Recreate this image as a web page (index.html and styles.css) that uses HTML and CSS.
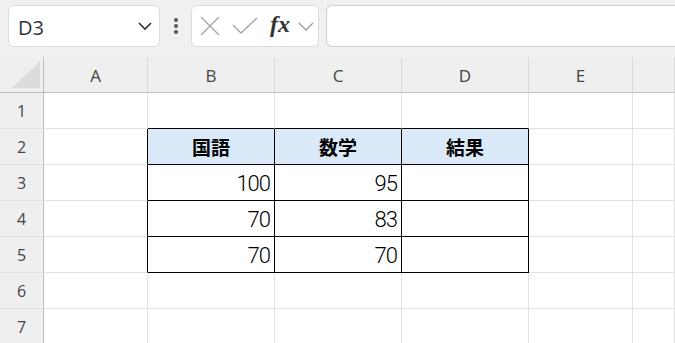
FILE: index.html
```html
<!DOCTYPE html>
<html lang="ja">
<head>
    <meta charset="UTF-8">
    <meta name="viewport" content="width=device-width, initial-scale=1.0">
    <title>Sheet1</title>
    <link rel="stylesheet" href="styles.css">
</head>
<body>

<div class="formula-bar">
    <div class="name-box">
        <span class="name-text">D3</span>
        <svg class="chevron" width="16" height="10" viewBox="0 0 16 10">
            <path d="M2 2 L8 8 L14 2" fill="none" stroke="#333" stroke-width="1.6"/>
        </svg>
    </div>
    <div class="more">
        <span class="dot"></span>
        <span class="dot"></span>
        <span class="dot"></span>
    </div>
    <div class="fx-box">
        <svg width="20" height="20" viewBox="0 0 20 20">
            <path d="M1 1 L19 19 M19 1 L1 19" fill="none" stroke="#a6a6a6" stroke-width="1.4"/>
        </svg>
        <svg width="26" height="18" viewBox="0 0 26 18">
            <path d="M1 8 L9 16 L25 1" fill="none" stroke="#a6a6a6" stroke-width="1.4"/>
        </svg>
        <span class="fx">fx</span>
        <svg width="16" height="10" viewBox="0 0 16 10">
            <path d="M1 2 L8 9 L15 2" fill="none" stroke="#9a9a9a" stroke-width="1.3"/>
        </svg>
    </div>
    <div class="formula-input"></div>
</div>

<table class="sheet">
    <colgroup>
        <col class="col-head">
        <col class="col-a">
        <col class="col-b">
        <col class="col-b">
        <col class="col-b">
        <col class="col-a">
        <col class="col-f">
    </colgroup>
    <tr class="col-labels">
        <th class="corner"><span class="triangle"></span></th>
        <th>A</th><th>B</th><th>C</th><th>D</th><th>E</th><th></th>
    </tr>
    <tr>
        <th class="row-label">1</th>
        <td></td><td class="top-edge"></td><td class="top-edge"></td><td class="top-edge"></td><td></td><td></td>
    </tr>
    <tr>
        <th class="row-label">2</th>
        <td class="left-edge"></td>
        <td class="box title">国語</td>
        <td class="box title">数学</td>
        <td class="box title">結果</td>
        <td></td><td></td>
    </tr>
    <tr>
        <th class="row-label">3</th>
        <td class="left-edge"></td>
        <td class="box num">100</td>
        <td class="box num">95</td>
        <td class="box"></td>
        <td></td><td></td>
    </tr>
    <tr>
        <th class="row-label">4</th>
        <td class="left-edge"></td>
        <td class="box num">70</td>
        <td class="box num">83</td>
        <td class="box"></td>
        <td></td><td></td>
    </tr>
    <tr>
        <th class="row-label">5</th>
        <td class="left-edge"></td>
        <td class="box num">70</td>
        <td class="box num">70</td>
        <td class="box"></td>
        <td></td><td></td>
    </tr>
    <tr>
        <th class="row-label">6</th>
        <td></td><td></td><td></td><td></td><td></td><td></td>
    </tr>
    <tr>
        <th class="row-label">7</th>
        <td></td><td></td><td></td><td></td><td></td><td></td>
    </tr>
</table>

</body>
</html>
```

FILE: styles.css
```css
body {
    margin: 0;
    font-family: "Open Sans", "Noto Sans", sans-serif;
    background-color: #fff;
    overflow: hidden;
}
.formula-bar {
    display: flex;
    align-items: stretch;
    height: 57px;
    box-sizing: border-box;
    padding: 5px 0 10px 8px;
    background-color: #eff1f1;
}
.name-box {
    display: flex;
    align-items: center;
    justify-content: space-between;
    width: 152px;
    box-sizing: border-box;
    padding: 0 6px 0 9px;
    background: #fff;
    border: 1px solid #dcdcdc;
    border-radius: 6px;
}
.name-text {
    font-size: 20px;
    color: #333;
    padding-top: 3px;
}
.more {
    width: 30px;
    display: flex;
    flex-direction: column;
    align-items: center;
    justify-content: center;
    gap: 2px;
    padding-left: 1px;
}
.dot {
    width: 4px;
    height: 4px;
    border-radius: 50%;
    background: #555;
}
.fx-box {
    display: flex;
    align-items: center;
    width: 128px;
    box-sizing: border-box;
    padding: 0 0 0 8px;
    gap: 13px;
    background: #fff;
    border: 1px solid #dcdcdc;
    border-radius: 6px;
}
.fx-box svg:nth-child(2) {
    margin-left: -1px;
}
.fx {
    font-family: "Liberation Serif", serif;
    font-style: italic;
    font-weight: bold;
    font-size: 24px;
    color: #333;
    margin-left: -1px;
    margin-right: -5px;
    padding-bottom: 3px;
}
.formula-input {
    flex: 1;
    margin-left: 7px;
    background: #fff;
    border: 1px solid #cfcfcf;
    border-right: none;
    border-radius: 6px 0 0 6px;
}
.sheet {
    border-collapse: separate;
    border-spacing: 0;
    table-layout: fixed;
    width: 675px;
}
.col-head { width: 44px; }
.col-a { width: 104px; }
.col-b { width: 127px; }
.col-f { width: 42px; }
.sheet th,
.sheet td {
    box-sizing: border-box;
    height: 36px;
    padding: 0;
    border-right: 1px solid #e1e1e1;
    border-bottom: 1px solid #e1e1e1;
}
.col-labels th {
    background: #efefef;
    font-weight: normal;
    font-size: 17px;
    color: #444;
    border-right-color: #d9d9d9;
    border-bottom-color: #bdbdbd;
    padding-top: 1px;
}
.corner {
    position: relative;
}
.corner .triangle {
    position: absolute;
    right: 3px;
    bottom: 4px;
    width: 0;
    height: 0;
    border-left: 28px solid transparent;
    border-bottom: 27px solid #dcdcdc;
}
.col-labels .corner {
    border-right-color: #bdbdbd;
}
.row-label {
    background: #efefef;
    font-weight: normal;
    font-size: 16px;
    color: #444;
    border-right-color: #bdbdbd !important;
    padding-top: 1px !important;
}
.sheet .top-edge {
    border-bottom-color: #000;
}
.sheet .left-edge {
    border-right-color: #000;
}
.sheet .box {
    border-right-color: #000;
    border-bottom-color: #000;
}
.title {
    background: #dae9f8;
    text-align: center;
    font-family: "Noto Sans CJK JP", sans-serif;
    font-weight: bold;
    font-size: 19px;
    color: #000;
}
.num {
    text-align: right;
    font-family: Roboto, sans-serif;
    font-weight: 300;
    font-size: 22px;
    letter-spacing: -1px;
    padding-right: 4px !important;
    padding-top: 1px !important;
    color: #000;
}
```
